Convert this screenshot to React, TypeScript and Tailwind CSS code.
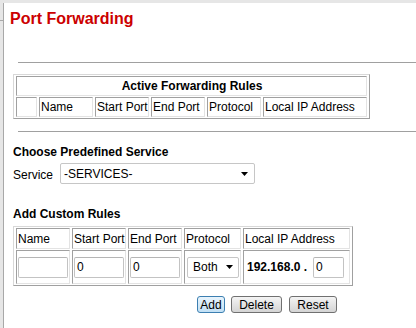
import React from "react";

const cell =
  "border border-t-[#a0a0a0] border-l-[#a0a0a0] border-r-[#e3e3e3] border-b-[#e3e3e3] pl-[1px] flex items-center whitespace-nowrap";

const tableBox =
  "grid gap-x-[2px] gap-y-[1px] px-[2px] py-[1px] border border-t-[#d8d8d8] border-l-[#d8d8d8] border-r-[#a0a0a0] border-b-[#a0a0a0] w-fit";

function Arrow() {
  return (
    <svg width="7" height="4" viewBox="0 0 7 4" className="shrink-0">
      <path d="M0 0H7L3.5 4Z" fill="#000" />
    </svg>
  );
}

function TextBox({ value, w }: { value: string; w: string }) {
  return (
    <div
      className={`${w} h-[21px] border border-[#c3c3c3] border-t-[#b5b5b5] rounded-[2px] bg-white pl-[2px] flex items-center`}
    >
      {value}
    </div>
  );
}

export default function App() {
  return (
    <div className="min-h-screen bg-white flex flex-col font-['Liberation_Sans',Arial,sans-serif] text-[12px] leading-[14px] text-black overflow-hidden">
      <div className="h-[3px] bg-[#e6e6e6] shrink-0" />
      <div className="flex flex-1">
        <div className="w-[4px] shrink-0 flex flex-col">
          <div className="h-[18px] bg-[#e6e6e6] border-r border-b border-[#a8a8a8]" />
          <div className="flex-1 bg-[#e6e6e6] border-r border-[#a8a8a8]" />
        </div>

        <main className="flex-1 pt-[7px] min-w-0">
          <h1 className="pl-[6px] text-[16px] leading-[18px] font-bold text-[#cc0000]">
            Port Forwarding
          </h1>

          <div className="mt-[34px] ml-[14px] h-px bg-[#a0a0a0]" />

          {/* active rules */}
          <div className={`${tableBox} mt-[11px] ml-[9px] grid-cols-[21px_54px_54px_54px_54px_104px] auto-rows-[20px]`}>
            <div className={`${cell} col-span-6 justify-center font-bold`}>
              Active Forwarding Rules
            </div>
            <div className={cell} />
            <div className={cell}>Name</div>
            <div className={cell}>Start Port</div>
            <div className={cell}>End Port</div>
            <div className={cell}>Protocol</div>
            <div className={cell}>Local IP Address</div>
          </div>

          <div className="mt-[12px] ml-[14px] h-px bg-[#a0a0a0]" />

          <div className="mt-[13px] ml-[9px] font-bold">Choose Predefined Service</div>
          <div className="mt-[4px] ml-[9px] flex items-center">
            <span className="w-[47px] pt-[2px]">Service</span>
            <div className="w-[195px] h-[21px] border border-[#c6c6c6] rounded-[2px] bg-white pl-[3px] pr-[6px] flex items-center justify-between">
              <span>-SERVICES-</span>
              <Arrow />
            </div>
          </div>

          <div className="mt-[23px] ml-[9px] font-bold">Add Custom Rules</div>

          {/* custom rule form */}
          <div className={`${tableBox} mt-[5px] ml-[9px] grid-cols-[54px_54px_54px_57px_107px] grid-rows-[21px_34px]`}>
            <div className={cell}>Name</div>
            <div className={cell}>Start Port</div>
            <div className={cell}>End Port</div>
            <div className={cell}>Protocol</div>
            <div className={cell}>Local IP Address</div>

            <div className={cell}>
              <TextBox value="" w="w-[50px]" />
            </div>
            <div className={cell}>
              <TextBox value="0" w="w-[50px]" />
            </div>
            <div className={cell}>
              <TextBox value="0" w="w-[50px]" />
            </div>
            <div className={cell}>
              <div className="ml-[1px] w-[52px] h-[21px] border border-[#c6c6c6] rounded-[2px] bg-white pl-[5px] pr-[5px] flex items-center justify-between">
                <span>Both</span>
                <Arrow />
              </div>
            </div>
            <div className={cell}>
              <span className="pl-[2px] font-bold">192.168.0 .</span>
              <div className="ml-[6px]">
                <TextBox value="0" w="w-[31px]" />
              </div>
            </div>
          </div>

          <div className="mt-[10px] ml-[193px] flex">
            <button className="w-[28px] h-[17px] border border-[#3c7fb1] rounded-[3px] bg-linear-to-b from-[#e8f4fc] to-[#c2e0f5] text-[12px] leading-[14px]">
              Add
            </button>
            <button className="ml-[6px] w-[51px] h-[17px] border border-[#707070] rounded-[3px] bg-linear-to-b from-[#f4f4f4] to-[#d4d4d4] text-[12px] leading-[14px]">
              Delete
            </button>
            <button className="ml-[7px] w-[48px] h-[17px] border border-[#707070] rounded-[3px] bg-linear-to-b from-[#f4f4f4] to-[#d4d4d4] text-[12px] leading-[14px]">
              Reset
            </button>
          </div>
        </main>
      </div>
    </div>
  );
}
